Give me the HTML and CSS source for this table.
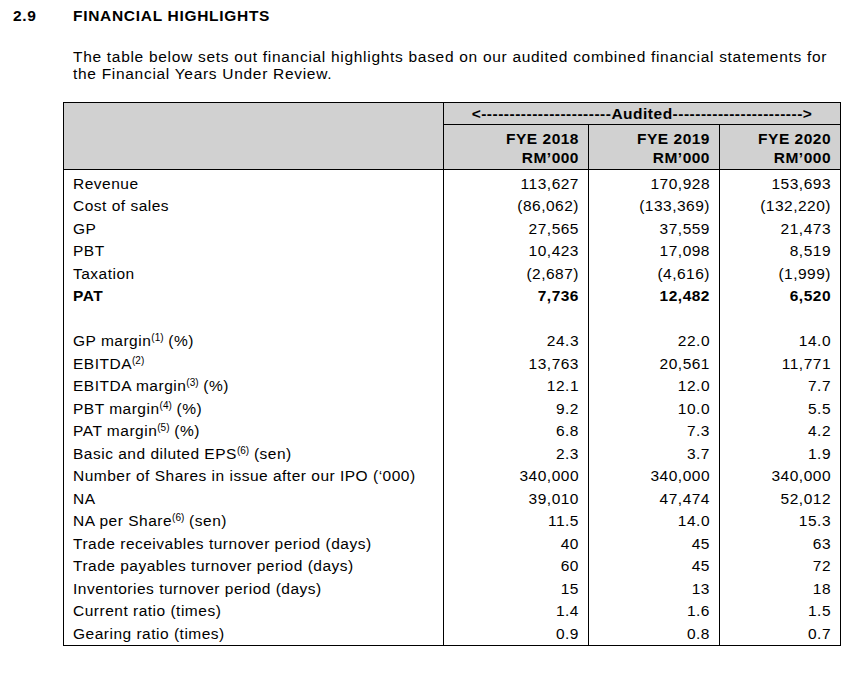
FILE: index.html
```html
<!DOCTYPE html>
<html>
<head>
<meta charset="utf-8">
<link rel="stylesheet" href="styles.css">
</head>
<body>
<div class="section">
  <div class="heading"><span class="num">2.9</span><span class="title">FINANCIAL HIGHLIGHTS</span></div>
  <p class="intro">The table below sets out financial highlights based on our audited combined financial statements for the Financial Years Under Review.</p>
  <table class="fin">
    <colgroup>
      <col class="c-label"><col class="c-2018"><col class="c-2019"><col class="c-2020">
    </colgroup>
    <thead>
      <tr class="h1">
        <th rowspan="2" class="blank"></th>
        <th colspan="3" class="audited">&lt;-----------------------Audited-----------------------&gt;</th>
      </tr>
      <tr class="h2">
        <th>FYE 2018<br>RM’000</th>
        <th>FYE 2019<br>RM’000</th>
        <th>FYE 2020<br>RM’000</th>
      </tr>
    </thead>
    <tbody>
      <tr class="first"><td>Revenue</td><td>113,627</td><td>170,928</td><td>153,693</td></tr>
      <tr><td>Cost of sales</td><td>(86,062)</td><td>(133,369)</td><td>(132,220)</td></tr>
      <tr><td>GP</td><td>27,565</td><td>37,559</td><td>21,473</td></tr>
      <tr><td>PBT</td><td>10,423</td><td>17,098</td><td>8,519</td></tr>
      <tr><td>Taxation</td><td>(2,687)</td><td>(4,616)</td><td>(1,999)</td></tr>
      <tr class="bold"><td>PAT</td><td>7,736</td><td>12,482</td><td>6,520</td></tr>
      <tr><td>&nbsp;</td><td></td><td></td><td></td></tr>
      <tr><td>GP margin<sup>(1)</sup> (%)</td><td>24.3</td><td>22.0</td><td>14.0</td></tr>
      <tr><td>EBITDA<sup>(2)</sup></td><td>13,763</td><td>20,561</td><td>11,771</td></tr>
      <tr><td>EBITDA margin<sup>(3)</sup> (%)</td><td>12.1</td><td>12.0</td><td>7.7</td></tr>
      <tr><td>PBT margin<sup>(4)</sup> (%)</td><td>9.2</td><td>10.0</td><td>5.5</td></tr>
      <tr><td>PAT margin<sup>(5)</sup> (%)</td><td>6.8</td><td>7.3</td><td>4.2</td></tr>
      <tr><td>Basic and diluted EPS<sup>(6)</sup> (sen)</td><td>2.3</td><td>3.7</td><td>1.9</td></tr>
      <tr><td>Number of Shares in issue after our IPO (‘000)</td><td>340,000</td><td>340,000</td><td>340,000</td></tr>
      <tr><td>NA</td><td>39,010</td><td>47,474</td><td>52,012</td></tr>
      <tr><td>NA per Share<sup>(6)</sup> (sen)</td><td>11.5</td><td>14.0</td><td>15.3</td></tr>
      <tr><td>Trade receivables turnover period (days)</td><td>40</td><td>45</td><td>63</td></tr>
      <tr><td>Trade payables turnover period (days)</td><td>60</td><td>45</td><td>72</td></tr>
      <tr><td>Inventories turnover period (days)</td><td>15</td><td>13</td><td>18</td></tr>
      <tr><td>Current ratio (times)</td><td>1.4</td><td>1.6</td><td>1.5</td></tr>
      <tr><td>Gearing ratio (times)</td><td>0.9</td><td>0.8</td><td>0.7</td></tr>
    </tbody>
  </table>
</div>
</body>
</html>
```

FILE: styles.css
```css
html, body {
  margin: 0;
  padding: 0;
  background: #fff;
}
body {
  font-family: "Liberation Sans", Arial, sans-serif;
  font-size: 15.5px;
  letter-spacing: 0.5px;
  line-height: 17.5px;
  color: #000;
}
.section {
  padding: 7px 0 0 0;
}
.heading {
  display: flex;
  font-weight: bold;
  letter-spacing: 0.7px;
}
.heading .num {
  width: 60px;
  padding-left: 13px;
}
.intro {
  margin: 23px 0 0 73px;
  width: 764px;
  letter-spacing: 0.7px;
}
.fin {
  margin: 19px 0 0 63px;
  border-collapse: collapse;
  width: 777px;
  table-layout: fixed;
}
.c-label { width: 380px; }
.c-2018 { width: 145px; }
.c-2019 { width: 131px; }
.c-2020 { width: 121px; }
.fin th, .fin td {
  border-left: 1px solid #000;
  border-right: 1px solid #000;
  padding: 0 9px;
}
.fin thead th {
  background: #d1d1d1;
  border: 1px solid #000;
  font-weight: bold;
}
.fin .h1 th.audited {
  text-align: center;
  line-height: 21px;
  padding: 0;
  letter-spacing: 0.5px;
}
.fin .h2 th {
  text-align: right;
  line-height: 18.6px;
  padding-top: 5.5px;
  padding-bottom: 2px;
}
.fin tbody td {
  line-height: 22.5px;
  text-align: right;
  white-space: nowrap;
}
.fin tbody td:first-child {
  text-align: left;
}
.fin tbody tr.first td {
  padding-top: 2.5px;
}
.fin tbody tr:last-child td {
  border-bottom: 1px solid #000;
}
.fin tr.bold td {
  font-weight: bold;
}
sup {
  font-size: 10px;
  letter-spacing: 0;
  line-height: 0;
  vertical-align: 5px;
}
```
